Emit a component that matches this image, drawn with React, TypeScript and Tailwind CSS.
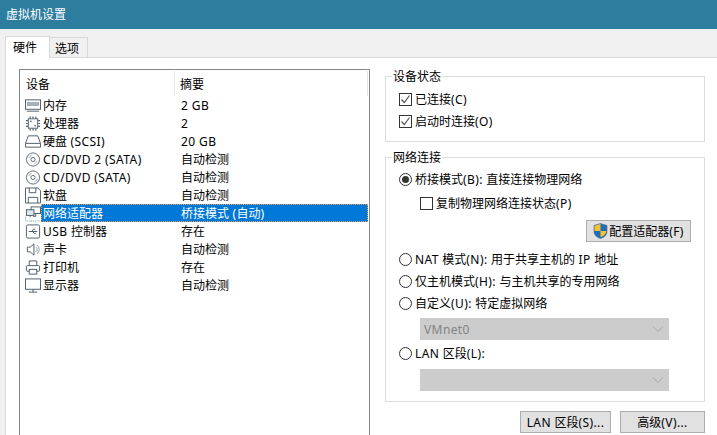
import React from "react";

const font = { fontFamily: '"Noto Sans", "Noto Sans CJK SC", sans-serif' };

const S = "#4a5a66";

const icons: Record<string, React.ReactNode> = {
  ram: (
    <>
      <rect x="0.5" y="2.500" width="16" height="10" fill="#fff" stroke={S} />
      <rect x="2.5" y="5.5" width="12" height="3" fill="#a9b3ba" stroke="#7b8790" strokeWidth="0.6" />
      <path d="M2 14.5h13" stroke={S} />
    </>
  ),
  cpu: (
    <>
      <rect x="3.5" y="3.5" width="10" height="10" fill="#fff" stroke={S} />
      <path d="M5.5 1v2M8.5 1v2M11.5 1v2M5.5 14v2M8.5 14v2M11.5 14v2M1 5.5h2M1 8.5h2M1 11.5h2M14 5.5h2M14 8.5h2M14 11.5h2" stroke={S} strokeWidth="1.3" />
      <rect x="5.500" y="5.500" width="1.5" height="1.5" fill={S} />
      <rect x="10" y="10" width="1.5" height="1.5" fill={S} />
    </>
  ),
  disk: (
    <>
      <path d="M3.5 2.5h10l3 8v4h-16v-4z" fill="#fff" stroke={S} />
      <path d="M0.5 10.5h16" stroke={S} />
    </>
  ),
  cd: (
    <>
      <circle cx="8.5" cy="8.5" r="7" fill="#fff" stroke="#5c6a74" />
      <circle cx="8.5" cy="8.5" r="2.2" fill="#fff" stroke="#5c6a74" />
      <path d="M4 7a5 5 0 0 1 3-3M13 10a5 5 0 0 1-3 3" stroke="#9aa5ac" fill="none" />
    </>
  ),
  floppy: (
    <>
      <path d="M0.5 0.5h13l3 3v13h-16z" fill="#fff" stroke={S} />
      <path d="M4.5 0.5v5h7v-5M3.5 16.5v-6h10v6" fill="none" stroke={S} />
    </>
  ),
  net: (
    <>
      <rect x="6.5" y="1.5" width="10" height="7" fill="#fff" stroke={S} />
      <rect x="1.5" y="4.5" width="8" height="6" fill="#dfe8ef" stroke={S} />
      <path d="M11.5 8.5v3h-3M5.5 10.5v2" stroke={S} fill="none" />
      <path d="M0.5 16.5h16M0.5 12v4" stroke="#5b8fc0" strokeDasharray="1 1" fill="none" />
    </>
  ),
  usb: (
    <>
      <rect x="1.5" y="1.5" width="14" height="14" rx="1.5" fill="#fff" stroke={S} />
      <path d="M4 8.5h9M7 8.5l2-2.5h2M8 8.5l2 2h1.5" stroke={S} fill="none" />
    </>
  ),
  sound: (
    <>
      <path d="M2.5 6h3l4-3.5v12l-4-3.5h-3z" fill="#fff" stroke={S} />
      <path d="M11.5 6a3 3 0 0 1 0 5M13 4a6 6 0 0 1 0 9" stroke="#8a959c" fill="none" />
    </>
  ),
  printer: (
    <>
      <path d="M4.5 6V1.5h8V6" fill="#fff" stroke={S} />
      <rect x="1.5" y="6.5" width="14" height="6" rx="1" fill="#fff" stroke={S} />
      <rect x="4.5" y="10.5" width="8" height="5" fill="#fff" stroke={S} />
    </>
  ),
  monitor: (
    <>
      <rect x="0.5" y="1.5" width="16" height="11" fill="#fff" stroke={S} />
      <path d="M4 15.5h9M8.5 12.5v3" stroke={S} />
    </>
  ),
};

const devices = [
  ["ram", "内存", "2 GB"],
  ["cpu", "处理器", "2"],
  ["disk", "硬盘 (SCSI)", "20 GB"],
  ["cd", "CD/DVD 2 (SATA)", "自动检测"],
  ["cd", "CD/DVD (SATA)", "自动检测"],
  ["floppy", "软盘", "自动检测"],
  ["net", "网络适配器", "桥接模式 (自动)"],
  ["usb", "USB 控制器", "存在"],
  ["sound", "声卡", "自动检测"],
  ["printer", "打印机", "存在"],
  ["monitor", "显示器", "自动检测"],
];

function T({ children }: { children: string }) {
  const parts = children.split(/([\u4e00-\u9fff]+)/);
  return (
    <span className="inline-block whitespace-nowrap pt-[2px]">
      {parts.map((p, i) =>
        i % 2 === 1 ? (
          <span key={i}>{p}</span>
        ) : (
          <span key={i} className="tracking-[0.4px]">{p}</span>
        ),
      )}
    </span>
  );
}

function Check({ on }: { on?: boolean }) {
  return (
    <span className="flex h-[13px] w-[13px] shrink-0 items-center justify-center border border-[#333] bg-white">
      {on && (
        <svg width="11" height="11" viewBox="0 0 11 11">
          <path d="M1.5 5.5l2.8 3 5.2-7" fill="none" stroke="#555" strokeWidth="1.2" />
        </svg>
      )}
    </span>
  );
}

function Radio({ on }: { on?: boolean }) {
  return (
    <span className="flex h-[13px] w-[13px] shrink-0 items-center justify-center rounded-full border border-[#333] bg-white">
      {on && <span className="h-[7px] w-[7px] rounded-full bg-[#333]" />}
    </span>
  );
}

function RadioRow({ on, label }: { on?: boolean; label: string }) {
  return (
    <div className="flex h-[18px] items-center gap-[3px]">
      <Radio on={on} />
      <T>{label}</T>
    </div>
  );
}

function Disabled({ value }: { value?: string }) {
  return (
    <div className="ml-[21px] flex h-[22px] w-[249px] items-center justify-between bg-[#cccccc] pl-[4px] pr-[5px] text-[#838383]">
      <span className="pt-[2px] tracking-[0.4px]">{value}</span>
      <svg width="12" height="8" viewBox="0 0 12 8">
        <path d="M1 1.5l5 5 5-5" fill="none" stroke="#a8a8a8" />
      </svg>
    </div>
  );
}

function Group({ title, className, children }: { title: string; className: string; children: React.ReactNode }) {
  return (
    <div className={`relative border border-[#dcdcdc] ${className}`}>
      <span className="absolute left-[6px] top-[-8px] bg-white px-px leading-[16px]">{title}</span>
      {children}
    </div>
  );
}

function Button({ className, children }: { className: string; children: React.ReactNode }) {
  return (
    <div className={`flex h-[22px] items-center justify-center border border-[#adadad] bg-[#e1e1e1] ${className}`}>
      {children}
    </div>
  );
}

export default function App() {
  return (
    <div style={font} className="flex h-[435px] w-[717px] flex-col overflow-hidden bg-[#f0f0f0] text-[12px] text-black">
      <div className="flex h-[29px] shrink-0 items-center bg-[#2d7d9e] pl-[6px] text-white">虚拟机设置</div>
      <div className="flex h-[28px] shrink-0 items-end pl-[5px]">
        <div className="relative top-px z-10 flex h-[22px] w-[45px] items-center border border-b-0 border-[#d9d9d9] bg-white pl-[7px]">硬件</div>
        <div className="flex h-[20px] w-[38px] items-center border border-l-0 border-b-0 border-[#d9d9d9] bg-[#f0f0f0] pl-[5px] pt-[2px]">选项</div>
      </div>
      <div className="ml-[5px] flex flex-1 gap-[15px] border-l border-t border-[#d9d9d9] bg-white pl-[13px] pt-[11px]">
        <div className="h-[400px] w-[351px] shrink-0 border border-[#828790] px-px">
          <div className="flex h-[26px] items-center pt-px">
            <div className="flex h-[25px] w-[154px] items-center border-r border-[#e5e5e5] pl-[5px] pt-[2px]">设备</div>
            <div className="flex h-[25px] flex-1 items-center border-r border-[#e5e5e5] pl-[5px] pt-[2px]">摘要</div>
          </div>
          {devices.map(([icon, name, value]) => {
            const sel = name === "网络适配器";
            return (
              <div key={name} className="flex h-[18px] items-center">
                <svg width="16" height="17" viewBox="0 0 17 17" className="ml-[4px] shrink-0">
                  {icons[icon]}
                </svg>
                <div className={`flex h-[18px] flex-1 items-center ${sel ? "bg-[#0078d7] text-white outline-1 -outline-offset-1 outline-dotted outline-[#e8a060]" : ""}`}>
                  <span className="ml-[2px] w-[138px] shrink-0"><T>{name}</T></span>
                  <T>{value}</T>
                </div>
              </div>
            );
          })}
        </div>
        <div className="flex w-[320px] shrink-0 flex-col pt-[7px]">
          <Group title="设备状态" className="h-[66px] pl-[13px] pt-[13px]">
            <div className="flex flex-col gap-[4px]">
              <div className="flex h-[18px] items-center gap-[3px]"><Check on /><T>已连接(C)</T></div>
              <div className="flex h-[18px] items-center gap-[3px]"><Check on /><T>启动时连接(O)</T></div>
            </div>
          </Group>
          <Group title="网络连接" className="mt-[15px] h-[245px] pl-[13px] pt-[12px]">
            <RadioRow on label="桥接模式(B): 直接连接物理网络" />
            <div className="ml-[21px] mt-[6px] flex h-[18px] items-center gap-[3px]"><Check /><T>复制物理网络连接状态(P)</T></div>
            <div className="mr-[13px] mt-[8px] flex justify-end">
              <Button className="w-[105px] gap-px">
                <svg width="15" height="16" viewBox="0 0 15 16">
                  <path d="M7.5 0.5l6.5 2v6c0 3.5-3 6-6.5 7-3.5-1-6.500-3.500-6.500-7v-6z" fill="#1f6fb8" stroke="#4a6a8a" strokeWidth="0.6" />
                  <path d="M7.500 1v7H1.500v-5.300zM7.500 8h6c-.3 3-3 5.300-6 6.300z" fill="#f5c12e" />
                </svg>
                <T>配置适配器(F)</T>
              </Button>
            </div>
            <div className="mt-[8px] flex flex-col gap-[4px]">
              <RadioRow label="NAT 模式(N): 用于共享主机的 IP 地址" />
              <RadioRow label="仅主机模式(H): 与主机共享的专用网络" />
              <RadioRow label="自定义(U): 特定虚拟网络" />
            </div>
            <div className="mt-[6px]"><Disabled value="VMnet0" /></div>
            <div className="mt-[4px]"><RadioRow label="LAN 区段(L):" /></div>
            <div className="mt-[7px]"><Disabled /></div>
          </Group>
          <div className="mt-[9px] flex justify-end gap-[9px]">
            <Button className="w-[91px]"><T>LAN 区段(S)...</T></Button>
            <Button className="w-[85px]"><T>高级(V)...</T></Button>
          </div>
        </div>
      </div>
    </div>
  );
}
